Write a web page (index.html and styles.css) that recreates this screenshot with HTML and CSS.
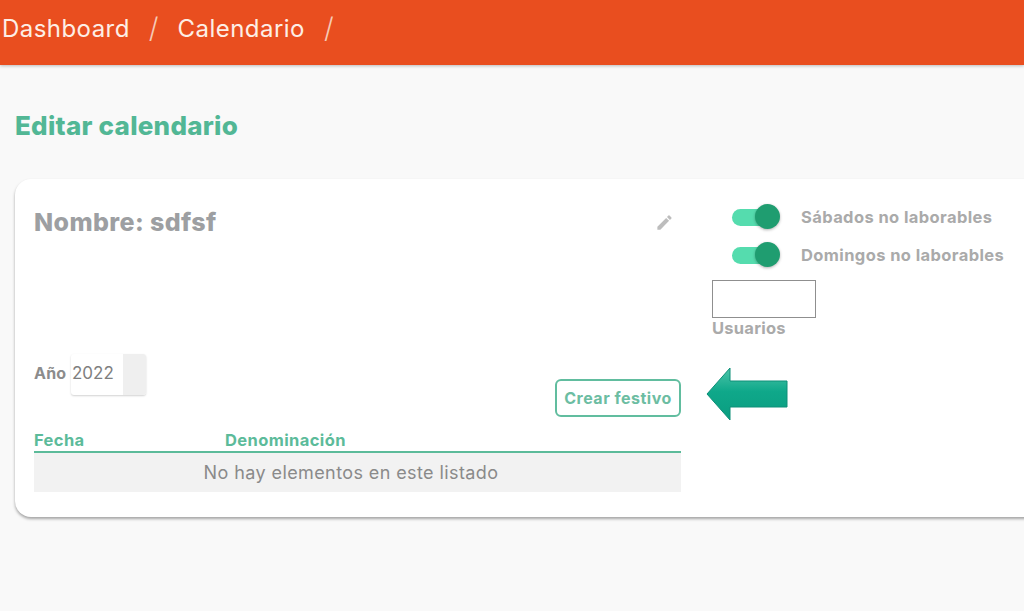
FILE: index.html
```html
<!DOCTYPE html>
<html lang="es">
<head>
<meta charset="utf-8">
<title>Editar calendario</title>
<link rel="stylesheet" href="styles.css">
</head>
<body>
<header class="topbar">
  <span class="crumb">Dashboard</span><span class="sep">/</span><span class="crumb">Calendario</span><span class="sep">/</span>
</header>
<main class="content">
  <h1 class="page-title">Editar calendario</h1>
  <section class="card">
    <div class="col-left">
      <div class="name-row">
        <h2 class="name">Nombre: sdfsf</h2>
        <svg class="pencil" viewBox="0 0 24 24" width="19" height="19"><path fill="#bdbdbd" d="M3 17.25V21h3.75L17.81 9.94l-3.75-3.75L3 17.25zM20.71 7.04a1 1 0 0 0 0-1.41l-2.34-2.34a1 1 0 0 0-1.41 0l-1.83 1.83 3.75 3.75 1.83-1.83z"/></svg>
      </div>
      <div class="tools-row">
        <div class="year">
          <span class="year-label">Año</span>
          <div class="year-box"><span class="year-value">2022</span><span class="year-spin"></span></div>
        </div>
        <button class="btn-create">Crear festivo</button>
      </div>
      <div class="table-head">
        <span class="th-date">Fecha</span><span>Denominación</span>
      </div>
      <div class="table-empty">No hay elementos en este listado</div>
    </div>
    <div class="col-right">
      <div class="switch-row">
        <span class="switch"><span class="track"></span><span class="thumb"></span></span>
        <span class="switch-label">Sábados no laborables</span>
      </div>
      <div class="switch-row">
        <span class="switch"><span class="track"></span><span class="thumb"></span></span>
        <span class="switch-label">Domingos no laborables</span>
      </div>
      <div class="users-box"></div>
      <div class="users-label">Usuarios</div>
      <svg class="arrow" viewBox="0 0 82 54" width="82" height="54">
        <defs>
          <linearGradient id="arrowFill" x1="0" y1="0" x2="0" y2="1">
            <stop offset="0" stop-color="#4cc4a8"/>
            <stop offset="0.45" stop-color="#0fa88a"/>
            <stop offset="1" stop-color="#0a9d80"/>
          </linearGradient>
        </defs>
        <polygon points="1,27 24,1 24,14 81,14 81,40 24,40 24,53" fill="url(#arrowFill)" stroke="#0e8f78" stroke-width="1"/>
      </svg>
    </div>
  </section>
</main>
</body>
</html>
```
FILE: styles.css
```css
* { box-sizing: border-box; }
html, body { margin: 0; height: 100%; }
body {
  background: #f9f9f9;
  font-family: Inter, "Open Sans", sans-serif;
  overflow: hidden;
}
.topbar {
  height: 65px;
  background: #e94e1f;
  box-shadow: 0 1px 3px rgba(0,0,0,.25);
  display: flex;
  align-items: center;
  padding: 0 0 9px 2px;
  color: #fdeee6;
  font-size: 24px;
}
.crumb { letter-spacing: .45px; }
.sep { margin: 0 19px; font-weight: 300; font-size: 28px; color: #f6c9b5; }
.content { padding: 0 0 0 15px; }
.page-title {
  margin: 47px 0 39px;
  font-size: 26px;
  line-height: 28px;
  font-weight: 800;
  letter-spacing: .26px;
  color: #52b795;
}
.card {
  width: 1040px;
  height: 338px;
  background: #fff;
  border-radius: 16px;
  box-shadow: 0 2px 3px rgba(0,0,0,.34);
  display: flex;
  padding: 0 0 0 19px;
}
.col-left { width: 647px; display: flex; flex-direction: column; }
.name-row {
  display: flex;
  justify-content: space-between;
  align-items: center;
  height: 32px;
  margin-top: 27px;
  padding-right: 7px;
}
.name { margin: 0; font-size: 25px; font-weight: 800; letter-spacing: .4px; color: #9d9fa2; }
.pencil { display: block; }
.tools-row {
  display: flex;
  justify-content: space-between;
  align-items: flex-start;
  margin-top: 116px;
  height: 64px;
}
.year { display: flex; align-items: flex-start; height: 42px; }
.year-label { font-size: 16px; line-height: 38px; font-weight: 700; letter-spacing: .2px; color: #8c8c8c; width: 37px; }
.year-box {
  display: flex;
  width: 75px;
  height: 41px;
  border-radius: 3px;
  box-shadow: 0 1px 2px rgba(0,0,0,.18);
}
.year-value { flex: 1; padding-left: 1px; font-size: 17px; line-height: 38px; color: #7f7f7f; }
.year-spin { width: 23px; background: #efefef; border-radius: 0 3px 3px 0; }
.btn-create {
  margin-top: 25px;
  width: 126px;
  height: 38px;
  padding: 0;
  background: #fff;
  border: 2px solid #61bd9f;
  border-radius: 6px;
  font: 700 16px Inter, "Open Sans", sans-serif;
  letter-spacing: .5px;
  color: #6cbda2;
}
.table-head {
  display: flex;
  height: 25px;
  margin-top: 10px;
  padding-top: 2px;
  border-bottom: 2px solid #5cbb9a;
  font-size: 16.5px;
  font-weight: 700;
  letter-spacing: .4px;
  line-height: 20px;
  color: #5cbb9a;
}
.th-date { width: 191px; }
.table-empty {
  height: 39px;
  padding-right: 13px;
  background: #f2f2f2;
  text-align: center;
  font-size: 18px;
  letter-spacing: .4px;
  line-height: 39px;
  color: #8a8a8a;
}
.col-right { position: relative; margin-left: 31px; flex: 1; padding-top: 19px; }
.switch-row { display: flex; align-items: center; height: 38px; }
.switch { position: relative; width: 48px; height: 26px; margin: 0 21px 0 20px; display: block; }
.track {
  position: absolute; left: 0; top: 5px;
  width: 46px; height: 17px;
  background: #55dcae;
  border-radius: 9px;
}
.thumb {
  position: absolute; left: 23px; top: 0;
  width: 25px; height: 25px;
  background: #1f9d70;
  border-radius: 50%;
  box-shadow: 0 1px 3px rgba(0,0,0,.3);
}
.switch-label { font-size: 16.5px; font-weight: 700; letter-spacing: .4px; color: #aaa; white-space: nowrap; }
.users-box {
  width: 104px; height: 38px;
  margin-top: 6px;
  border: 1px solid #8f8f8f;
}
.users-label { margin-top: 1px; font-size: 16.5px; font-weight: 700; letter-spacing: .25px; line-height: 18px; color: #aaa; }
.arrow { position: absolute; left: -6px; top: 188px; }
```
